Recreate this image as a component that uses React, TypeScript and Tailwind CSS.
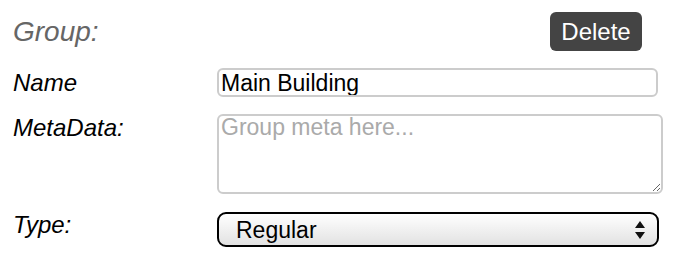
export default function App() {
  const label = "text-[24px] italic text-black leading-none";
  return (
    <div className="w-[676px] h-[266px] bg-white font-['Liberation_Sans',Arial,sans-serif] px-[13px] pt-[12px]">
      <div className="flex items-center justify-between h-[39px] pr-[21px]">
        <span className="text-[28px] italic text-[#666] leading-none pt-[1px]">Group:</span>
        <button className="h-[39px] w-[92px] rounded-[6px] bg-[#444] text-white text-[24px] leading-none">Delete</button>
      </div>

      <div className="grid grid-cols-[204px_1fr] mt-[17px] items-start">
        <span className={`${label} pt-[3px]`}>Name</span>
        <input
          className="w-[441px] h-[29px] rounded-[6px] border-2 border-[#ccc] px-[2px] pt-[2px] pb-0 text-[23px] leading-[25px] text-black outline-none"
          defaultValue="Main Building"
        />

        <span className={`${label} pt-[2px] mt-[17px]`}>MetaData:</span>
        <textarea
          className="mt-[17px] w-[446px] h-[80px] rounded-[6px] border-2 border-[#ccc] px-[2px] py-0 text-[23px] leading-[22px] placeholder:text-[#aaa] outline-none"
          placeholder="Group meta here..."
        />

        <span className={`${label} pt-[1px] mt-[18px]`}>Type:</span>
        <div className="mt-[18px] relative w-[442px] h-[35px] rounded-[9px] border-2 border-black bg-gradient-to-b from-white to-[#e2e2e2] flex items-center pl-[17px]">
          <span className="text-[23px] text-black leading-none pt-[2px]">Regular</span>
          <svg className="absolute right-[12px] top-[7px]" width="10" height="18" viewBox="0 0 10 18">
            <path d="M5 0 L10 7 L0 7 Z M0 11 L10 11 L5 18 Z" fill="#111" />
          </svg>
        </div>
      </div>
    </div>
  );
}
